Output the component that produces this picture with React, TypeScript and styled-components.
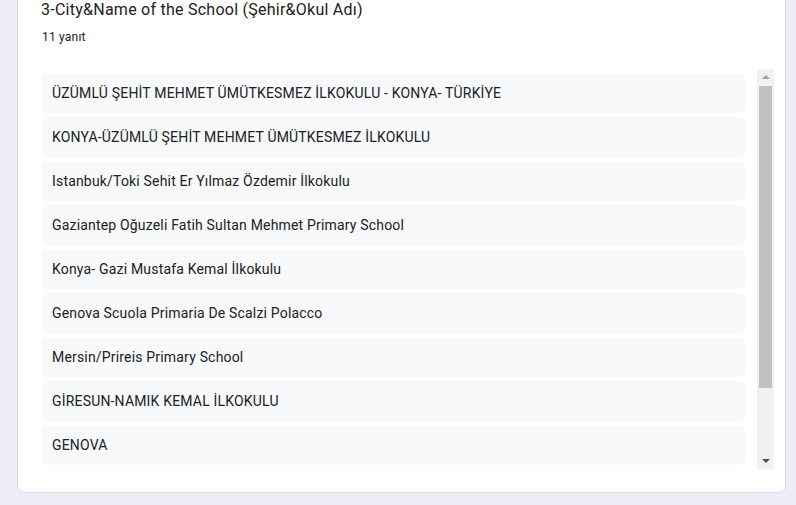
import React from "react";
import styled, { createGlobalStyle } from "styled-components";

const GlobalStyle = createGlobalStyle`
  html, body {
    margin: 0;
    padding: 0;
    background: #f0ebf8;
    overflow: hidden;
  }
  body {
    font-family: Roboto, "Liberation Sans", Arial, sans-serif;
  }
`;

const Page = styled.div`
  width: 796px;
  height: 505px;
  overflow: hidden;
  background: #f0ebf8;
`;

const Card = styled.section`
  box-sizing: border-box;
  width: 769px;
  margin: -20px 0 0 17px;
  padding: 17px 11px 23px 24px;
  background: #fff;
  border: 1px solid #dadce0;
  border-radius: 8px;
  display: flex;
  flex-direction: column;
`;

const Title = styled.h2`
  margin: 0 0 0 -1px;
  font-family: Roboto, "Liberation Sans", Arial, sans-serif;
  font-size: 16px;
  font-weight: 400;
  line-height: 24px;
  letter-spacing: 0.25px;
  color: #202124;
`;

const Count = styled.div`
  margin-top: 7px;
  font-size: 12px;
  line-height: 16px;
  color: #202124;
  letter-spacing: 0.2px;
`;

const ListRow = styled.div`
  margin-top: 24px;
  height: 400px;
  display: flex;
  gap: 12px;
`;

const AnswerList = styled.div`
  flex: 1 1 auto;
  min-width: 0;
  overflow: hidden;
  box-sizing: border-box;
  padding: 4px 0;
  display: flex;
  flex-direction: column;
  gap: 4px;
`;

const Answer = styled.div`
  flex: 0 0 auto;
  box-sizing: border-box;
  height: 40px;
  padding: 10px;
  background: #f8f9fa;
  border-radius: 4px;
  font-size: 14px;
  line-height: 20px;
  color: #202124;
  letter-spacing: 0.18px;
  white-space: nowrap;
  overflow: hidden;
  text-overflow: ellipsis;
`;

const Scrollbar = styled.div`
  flex: 0 0 17px;
  width: 17px;
  background: #f1f1f1;
  display: flex;
  flex-direction: column;
`;

const ScrollButton = styled.div<{ $dir: "up" | "down" }>`
  flex: 0 0 17px;
  height: 17px;
  display: flex;
  align-items: center;
  justify-content: center;

  &::before {
    content: "";
    width: 0;
    height: 0;
    border-left: 4px solid transparent;
    border-right: 4px solid transparent;
    ${(p) =>
      p.$dir === "up"
        ? "border-bottom: 4px solid #a3a3a3; margin-top: -1px;"
        : "border-top: 4px solid #505050; margin-top: 1px;"}
  }
`;

const Track = styled.div`
  flex: 1 1 auto;
  padding: 0 2px;
`;

const Thumb = styled.div`
  height: 302px;
  background: #c1c1c1;
`;

const answers = [
  "ÜZÜMLÜ ŞEHİT MEHMET ÜMÜTKESMEZ İLKOKULU - KONYA- TÜRKİYE",
  "KONYA-ÜZÜMLÜ ŞEHİT MEHMET ÜMÜTKESMEZ İLKOKULU",
  "Istanbuk/Toki Sehit Er Yılmaz Özdemir İlkokulu",
  "Gaziantep Oğuzeli Fatih Sultan Mehmet Primary School",
  "Konya- Gazi Mustafa Kemal İlkokulu",
  "Genova Scuola Primaria De Scalzi Polacco",
  "Mersin/Prireis Primary School",
  "GİRESUN-NAMIK KEMAL İLKOKULU",
  "GENOVA",
];

export default function App() {
  return (
    <Page>
      <GlobalStyle />
      <Card>
        <Title>3-City&amp;Name of the School (Şehir&amp;Okul Adı)</Title>
        <Count>11 yanıt</Count>
        <ListRow>
          <AnswerList>
            {answers.map((a, i) => (
              <Answer key={i}>{a}</Answer>
            ))}
          </AnswerList>
          <Scrollbar>
            <ScrollButton $dir="up" />
            <Track>
              <Thumb />
            </Track>
            <ScrollButton $dir="down" />
          </Scrollbar>
        </ListRow>
      </Card>
    </Page>
  );
}
